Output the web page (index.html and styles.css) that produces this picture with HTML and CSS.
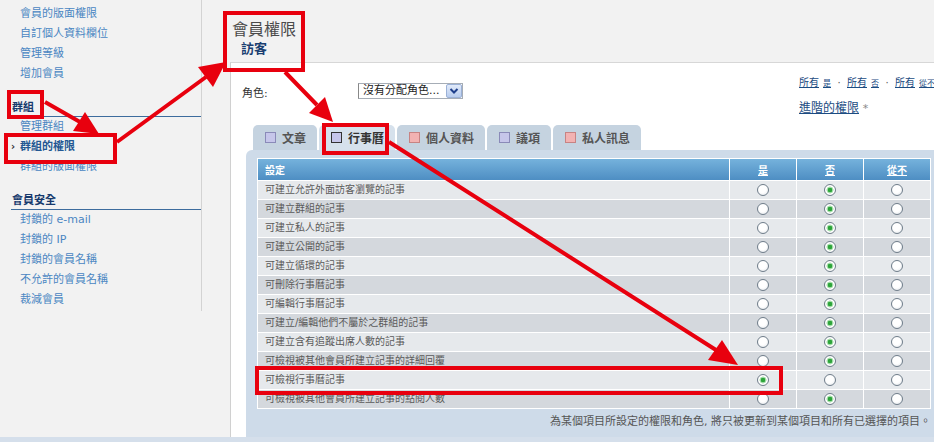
FILE: index.html
```html
<!DOCTYPE html>
<html lang="zh-Hant">
<head>
  <meta charset="UTF-8">
  <meta name="viewport" content="width=device-width, initial-scale=1.0">
  <title>會員權限</title>
  <link rel="stylesheet" href="styles.css">
</head>
<body>

<div class="page">
  <aside class="sidebar">
    <div class="side-nav">
      <ul class="nav-list">
        <li><a href="#">會員的版面權限</a></li>
        <li><a href="#">自訂個人資料欄位</a></li>
        <li><a href="#">管理等級</a></li>
        <li><a href="#">增加會員</a></li>
      </ul>
      <h4 class="nav-head">群組</h4>
      <ul class="nav-list">
        <li><a href="#">管理群組</a></li>
        <li class="current"><a href="#"><span class="mark">›</span>群組的權限</a></li>
        <li><a href="#">群組的版面權限</a></li>
      </ul>
      <h4 class="nav-head">會員安全</h4>
      <ul class="nav-list">
        <li><a href="#">封鎖的 e-mail</a></li>
        <li><a href="#">封鎖的 IP</a></li>
        <li><a href="#">封鎖的會員名稱</a></li>
        <li><a href="#">不允許的會員名稱</a></li>
        <li><a href="#">裁減會員</a></li>
      </ul>
    </div>
  </aside>

  <main class="content">
    <div class="title-block">
      <h1>會員權限</h1>
      <h2>訪客</h2>
    </div>

    <div class="panel">
      <div class="role-bar">
        <div class="role">
          <label>角色:</label>
          <div class="select">
            <span class="select-text">沒有分配角色...</span>
            <span class="select-btn">
              <svg width="10" height="8" viewBox="0 0 10 8"><path d="M1.5 2 L5 5.5 L8.5 2" fill="none" stroke="#1e3f8c" stroke-width="2"/></svg>
            </span>
          </div>
        </div>
        <div class="perm-links">
          <p class="set-all"><a href="#">所有<small>是</small></a><span class="sep">·</span><a href="#">所有<small>否</small></a><span class="sep">·</span><a href="#">所有<small>從不</small></a></p>
          <p class="advanced"><a href="#">進階的權限</a> <span class="star">*</span></p>
        </div>
      </div>

      <ul class="tabs">
        <li class="tab"><span class="ico blue"></span>文章</li>
        <li class="tab active"><span class="ico blue"></span>行事曆</li>
        <li class="tab"><span class="ico pink"></span>個人資料</li>
        <li class="tab"><span class="ico blue"></span>議項</li>
        <li class="tab"><span class="ico pink"></span>私人訊息</li>
      </ul>

      <div class="grid-panel">
        <table class="perm-table">
          <colgroup>
            <col class="c-name"><col class="c-opt"><col class="c-opt"><col class="c-last">
          </colgroup>
          <thead>
            <tr><th class="name">設定</th><th><a href="#">是</a></th><th><a href="#">否</a></th><th><a href="#">從不</a></th></tr>
          </thead>
          <tbody>
            <tr><td class="name">可建立允許外面訪客瀏覽的記事</td><td><span class="radio"></span></td><td><span class="radio on"></span></td><td><span class="radio"></span></td></tr>
            <tr><td class="name">可建立群組的記事</td><td><span class="radio"></span></td><td><span class="radio on"></span></td><td><span class="radio"></span></td></tr>
            <tr><td class="name">可建立私人的記事</td><td><span class="radio"></span></td><td><span class="radio on"></span></td><td><span class="radio"></span></td></tr>
            <tr><td class="name">可建立公開的記事</td><td><span class="radio"></span></td><td><span class="radio on"></span></td><td><span class="radio"></span></td></tr>
            <tr><td class="name">可建立循環的記事</td><td><span class="radio"></span></td><td><span class="radio on"></span></td><td><span class="radio"></span></td></tr>
            <tr><td class="name">可刪除行事曆記事</td><td><span class="radio"></span></td><td><span class="radio on"></span></td><td><span class="radio"></span></td></tr>
            <tr><td class="name">可編輯行事曆記事</td><td><span class="radio"></span></td><td><span class="radio on"></span></td><td><span class="radio"></span></td></tr>
            <tr><td class="name">可建立/編輯他們不屬於之群組的記事</td><td><span class="radio"></span></td><td><span class="radio on"></span></td><td><span class="radio"></span></td></tr>
            <tr><td class="name">可建立含有追蹤出席人數的記事</td><td><span class="radio"></span></td><td><span class="radio on"></span></td><td><span class="radio"></span></td></tr>
            <tr><td class="name">可檢視被其他會員所建立記事的詳細回覆</td><td><span class="radio"></span></td><td><span class="radio on"></span></td><td><span class="radio"></span></td></tr>
            <tr><td class="name">可檢視行事曆記事</td><td><span class="radio on"></span></td><td><span class="radio"></span></td><td><span class="radio"></span></td></tr>
            <tr><td class="name">可檢視被其他會員所建立記事的點閱人數</td><td><span class="radio"></span></td><td><span class="radio on"></span></td><td><span class="radio"></span></td></tr>
          </tbody>
        </table>
        <p class="note">為某個項目所設定的權限和角色, 將只被更新到某個項目和所有已選擇的項目。</p>
      </div>
    </div>
  </main>
</div>
<div class="foot-strip"></div>

<!-- red callouts drawn over the page -->
<svg class="marks" width="934" height="442" viewBox="0 0 934 442">
  <g fill="none" stroke="#e8000e" stroke-width="4">
    <rect x="225" y="13" width="78" height="57"/>
    <rect x="9" y="92" width="33" height="25"/>
    <rect x="6" y="135" width="109" height="27"/>
    <rect x="324" y="125" width="63" height="28"/>
    <rect x="257" y="368" width="524" height="25"/>
    <path d="M45 102 L80 122 M117 142 L206 77 M285 72 L317 105 M389 142 L716 350"/>
  </g>
  <g fill="#e8000e">
    <polygon points="99,134 73,131 85,112"/>
    <polygon points="226,62 213,87 198,67"/>
    <polygon points="333,122 309,113 325,97"/>
    <polygon points="738,365 708,360 722,340"/>
  </g>
</svg>

</body>
</html>
```

FILE: styles.css
```css
* { box-sizing: border-box; }
html, body { margin: 0; padding: 0; }
body {
  position: relative;
  width: 934px;
  height: 442px;
  overflow: hidden;
  background: #f2f2f2;
  font-family: "DejaVu Sans", "Noto Sans CJK TC", sans-serif;
  font-size: 11px;
  color: #555;
}
a { text-decoration: none; }
ul { list-style: none; margin: 0; padding: 0; }
p { margin: 0; }

.page { display: flex; height: 437px; }

/* left navigation */
.sidebar { width: 230px; flex: none; }
.side-nav { margin-left: 11px; width: 191px; height: 311px; padding-top: 4px; border-right: 1px solid #d3d3d3; }
.nav-list li { height: 20px; line-height: 20px; white-space: nowrap; }
.nav-list a { display: block; padding-left: 9px; color: #4a86c2; }
.nav-list .current a { color: #235893; font-weight: bold; }
.mark { display: inline-block; width: 9px; margin-left: -9px; color: #333; font-weight: bold; font-size: 10px; }
.nav-head {
  margin: 16px 0 0;
  height: 17px;
  padding-left: 1px;
  line-height: 16px;
  font-size: 11px;
  font-weight: bold;
  color: #173a6d;
  border-bottom: 1px solid #3d6c9d;
}

/* main column */
.content { flex: 1; display: flex; flex-direction: column; }
.title-block { height: 62px; padding: 20px 0 0 2px; }
.title-block h1 { margin: 0; font-size: 16px; line-height: 20px; font-weight: normal; color: #4a4a4a; }
.title-block h2 { margin: 1px 0 0 9px; font-size: 13px; line-height: 16px; font-weight: bold; color: #1b3f71; }

.panel {
  flex: 1;
  display: flex;
  flex-direction: column;
  background: #fff;
  border-top: 1px solid #d7d7d7;
  border-left: 1px solid #d0d0d0;
}

.role-bar { height: 62px; display: flex; justify-content: space-between; flex: none; }
.role { display: flex; align-items: flex-start; padding: 20px 0 0 11px; }
.role label { width: 116px; margin-top: 3px; line-height: 16px; color: #333; }
.select {
  display: flex;
  align-items: center;
  justify-content: space-between;
  width: 105px;
  height: 16px;
  padding-left: 4px;
  border: 1px solid #a6adb6;
  border-left-color: #888;
  background: #fff;
  color: #222;
  font-size: 11px;
  line-height: 14px;
}
.select-btn {
  display: flex;
  align-items: center;
  justify-content: center;
  width: 16px;
  height: 14px;
  border: 1px solid #9bb1d7;
  border-radius: 2px;
  background: linear-gradient(#e1eafa, #b8ccee);
}

.perm-links { flex: none; width: 135px; padding-top: 13px; white-space: nowrap; }
.perm-links a { color: #1c4c82; text-decoration: underline; }
.set-all { font-size: 10px; line-height: 14px; }
.set-all small { font-size: 8px; margin-left: 4px; }
.sep { display: inline-block; width: 16px; text-align: center; color: #555; }
.advanced { margin-top: 9px; font-size: 12px; line-height: 16px; }
.star { color: #888; font-size: 11px; }

/* tab strip */
.tabs { display: flex; gap: 2px; height: 25px; margin-left: 22px; flex: none; }
.tab {
  display: flex;
  align-items: center;
  gap: 6px;
  padding: 0 11px 0 12px;
  background: #c5d3e0;
  border-radius: 5px 5px 0 0;
  font-size: 12px;
  font-weight: bold;
  color: #555;
}
.tab.active { background: #d6e1ec; color: #333; }
.ico { width: 11px; height: 11px; border: 1px solid #8a8ab8; background: #c6c6ea; }
.ico.pink { border-color: #c78383; background: #f2b2b2; }
.tab.active .ico { border-color: #333; }

.grid-panel {
  flex: 1;
  margin-left: 15px;
  padding: 8px 3px 0 11px;
  background: #cedbe9;
  border-radius: 6px 0 0 0;
}

/* permissions grid */
.perm-table {
  width: 674px;
  table-layout: fixed;
  border-collapse: separate;
  border-spacing: 0;
  border: 1px solid #fff;
  font-size: 10px;
}
.c-name { width: 472px; }
.c-opt { width: 67px; }
.c-last { width: 66px; }
.perm-table th {
  height: 22px;
  padding: 0;
  border-bottom: 1px solid #fff;
  border-right: 1px solid #fff;
  background: linear-gradient(#75b2dc, #4e8ec3);
  color: #fff;
  font-weight: bold;
  text-align: center;
}
.perm-table th a { color: #fff; text-decoration: underline; }
.perm-table th.name { text-align: left; padding-left: 7px; }
.perm-table td {
  height: 19px;
  padding: 0;
  line-height: 18px;
  text-align: center;
  border-bottom: 1px solid #fff;
  border-right: 1px solid #fff;
  background: #e6e9ec;
  white-space: nowrap;
}
.perm-table tr:nth-child(even) td { background: #d4d8dd; }
.perm-table tr:last-child td { height: 18px; border-bottom: 0; }
.perm-table th:last-child, .perm-table td:last-child { border-right: 0; }
.perm-table td.name { text-align: left; padding-left: 7px; color: #5a5a5a; }

.radio {
  display: inline-block;
  width: 12px;
  height: 12px;
  vertical-align: middle;
  border: 1px solid #6f7d8a;
  border-radius: 50%;
  background: radial-gradient(circle at 45% 40%, #fff 45%, #dde2e7);
}
.radio.on { background: radial-gradient(circle, #2da43a 0 2px, #a9dfae 2.6px 3.2px, #fff 3.8px); }

.note { padding: 5px 0 0 0; text-align: right; line-height: 16px; color: #555; white-space: nowrap; }

.foot-strip { height: 5px; background: #d5dfeb; }

.marks { position: absolute; top: 0; left: 0; pointer-events: none; }
```
